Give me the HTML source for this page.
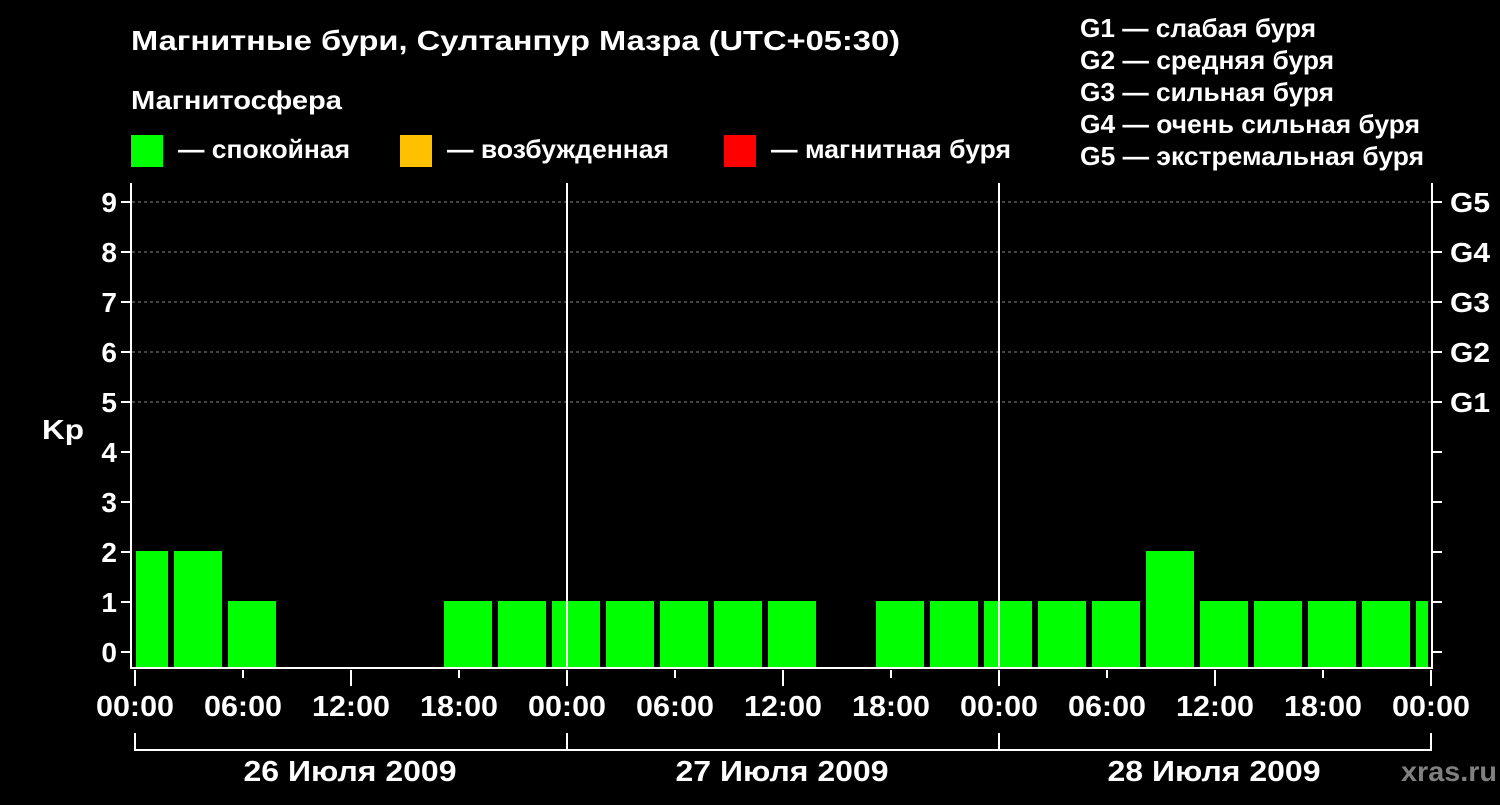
<!DOCTYPE html>
<html><head><meta charset="utf-8"><style>
body{margin:0;background:#000;width:1500px;height:800px;overflow:hidden}
svg text{font-family:"Liberation Sans",sans-serif;font-weight:bold;fill:#fff}
</style></head><body>
<svg width="1500" height="800" xmlns="http://www.w3.org/2000/svg">
<text x="131" y="50" font-size="28" textLength="769" lengthAdjust="spacingAndGlyphs">Магнитные бури, Султанпур Мазра (UTC+05:30)</text>
<text x="131" y="109" font-size="26" textLength="211" lengthAdjust="spacingAndGlyphs">Магнитосфера</text>
<rect x="131" y="135" width="32" height="32" fill="#00ff00"/>
<text x="178" y="158" font-size="26" textLength="172" lengthAdjust="spacingAndGlyphs">— спокойная</text>
<rect x="400" y="135" width="32" height="32" fill="#ffc000"/>
<text x="447" y="158" font-size="26" textLength="222" lengthAdjust="spacingAndGlyphs">— возбужденная</text>
<rect x="724" y="135" width="32" height="32" fill="#ff0000"/>
<text x="771" y="158" font-size="26" textLength="240" lengthAdjust="spacingAndGlyphs">— магнитная буря</text>
<g font-size="26">
<text x="1080" y="37" textLength="236" lengthAdjust="spacingAndGlyphs">G1 — слабая буря</text>
<text x="1080" y="69" textLength="254" lengthAdjust="spacingAndGlyphs">G2 — средняя буря</text>
<text x="1080" y="101" textLength="254" lengthAdjust="spacingAndGlyphs">G3 — сильная буря</text>
<text x="1080" y="133" textLength="340" lengthAdjust="spacingAndGlyphs">G4 — очень сильная буря</text>
<text x="1080" y="165" textLength="344" lengthAdjust="spacingAndGlyphs">G5 — экстремальная буря</text>
</g>
<g stroke="#888" stroke-dasharray="3,3" stroke-width="1">
<line x1="132" x2="1431" y1="202" y2="202"/><line x1="132" x2="1431" y1="252" y2="252"/>
<line x1="132" x2="1431" y1="302" y2="302"/><line x1="132" x2="1431" y1="352" y2="352"/>
<line x1="132" x2="1431" y1="402" y2="402"/>
</g>
<g fill="#00ff00">
<rect x="136" y="551" width="32" height="117"/>
<rect x="174" y="551" width="48" height="117"/>
<rect x="228" y="601" width="48" height="67"/>
<rect x="444" y="601" width="48" height="67"/>
<rect x="498" y="601" width="48" height="67"/>
<rect x="552" y="601" width="48" height="67"/>
<rect x="606" y="601" width="48" height="67"/>
<rect x="660" y="601" width="48" height="67"/>
<rect x="714" y="601" width="48" height="67"/>
<rect x="768" y="601" width="48" height="67"/>
<rect x="876" y="601" width="48" height="67"/>
<rect x="930" y="601" width="48" height="67"/>
<rect x="984" y="601" width="48" height="67"/>
<rect x="1038" y="601" width="48" height="67"/>
<rect x="1092" y="601" width="48" height="67"/>
<rect x="1146" y="551" width="48" height="117"/>
<rect x="1200" y="601" width="48" height="67"/>
<rect x="1254" y="601" width="48" height="67"/>
<rect x="1308" y="601" width="48" height="67"/>
<rect x="1362" y="601" width="48" height="67"/>
<rect x="1416" y="601" width="12" height="67"/>
</g>
<g stroke="#fff" stroke-width="2" fill="none">
<line x1="131" y1="183" x2="131" y2="669"/>
<line x1="1432" y1="183" x2="1432" y2="669"/>
<line x1="130" y1="668" x2="1433" y2="668"/>
<line x1="567" y1="183" x2="567" y2="668"/>
<line x1="999" y1="183" x2="999" y2="668"/>
<path d="M121 202h10M121 252h10M121 302h10M121 352h10M121 402h10M121 452h10M121 502h10M121 552h10M121 602h10M121 652h10"/>
<path d="M1432 202h10M1432 252h10M1432 302h10M1432 352h10M1432 402h10M1432 452h10M1432 502h10M1432 552h10M1432 602h10M1432 652h10"/>
<path d="M135 670v16M243 670v8M351 670v16M459 670v8M567 670v16M675 670v8M783 670v16M891 670v8M999 670v16M1107 670v8M1215 670v16M1323 670v8M1431 670v16"/>
<path d="M135 733v17h1296v-17M567 733v17M999 733v17"/>
</g>
<g font-size="28" text-anchor="end">
<text x="117" y="212">9</text><text x="117" y="262">8</text><text x="117" y="312">7</text>
<text x="117" y="362">6</text><text x="117" y="412">5</text><text x="117" y="462">4</text>
<text x="117" y="512">3</text><text x="117" y="562">2</text><text x="117" y="612">1</text>
<text x="117" y="662">0</text>
</g>
<text x="42" y="439" font-size="28" textLength="42" lengthAdjust="spacingAndGlyphs">Kp</text>
<g font-size="28">
<text x="1450" y="212" textLength="40" lengthAdjust="spacingAndGlyphs">G5</text><text x="1450" y="262" textLength="40" lengthAdjust="spacingAndGlyphs">G4</text><text x="1450" y="312" textLength="40" lengthAdjust="spacingAndGlyphs">G3</text>
<text x="1450" y="362" textLength="40" lengthAdjust="spacingAndGlyphs">G2</text><text x="1450" y="412" textLength="40" lengthAdjust="spacingAndGlyphs">G1</text>
</g>
<g font-size="29" text-anchor="middle">
<text x="135" y="716" textLength="78" lengthAdjust="spacingAndGlyphs">00:00</text><text x="243" y="716" textLength="78" lengthAdjust="spacingAndGlyphs">06:00</text><text x="351" y="716" textLength="78" lengthAdjust="spacingAndGlyphs">12:00</text>
<text x="459" y="716" textLength="78" lengthAdjust="spacingAndGlyphs">18:00</text><text x="567" y="716" textLength="78" lengthAdjust="spacingAndGlyphs">00:00</text><text x="675" y="716" textLength="78" lengthAdjust="spacingAndGlyphs">06:00</text>
<text x="783" y="716" textLength="78" lengthAdjust="spacingAndGlyphs">12:00</text><text x="891" y="716" textLength="78" lengthAdjust="spacingAndGlyphs">18:00</text><text x="999" y="716" textLength="78" lengthAdjust="spacingAndGlyphs">00:00</text>
<text x="1107" y="716" textLength="78" lengthAdjust="spacingAndGlyphs">06:00</text><text x="1215" y="716" textLength="78" lengthAdjust="spacingAndGlyphs">12:00</text><text x="1323" y="716" textLength="78" lengthAdjust="spacingAndGlyphs">18:00</text>
<text x="1431" y="716" textLength="78" lengthAdjust="spacingAndGlyphs">00:00</text>
<text x="350" y="781" textLength="213" lengthAdjust="spacingAndGlyphs">26 Июля 2009</text>
<text x="782" y="781" textLength="213" lengthAdjust="spacingAndGlyphs">27 Июля 2009</text>
<text x="1214" y="781" textLength="213" lengthAdjust="spacingAndGlyphs">28 Июля 2009</text>
</g>
<text x="1401" y="781" font-size="28" textLength="96" lengthAdjust="spacingAndGlyphs" style="fill:#808080">xras.ru</text>
</svg>
</body></html>
